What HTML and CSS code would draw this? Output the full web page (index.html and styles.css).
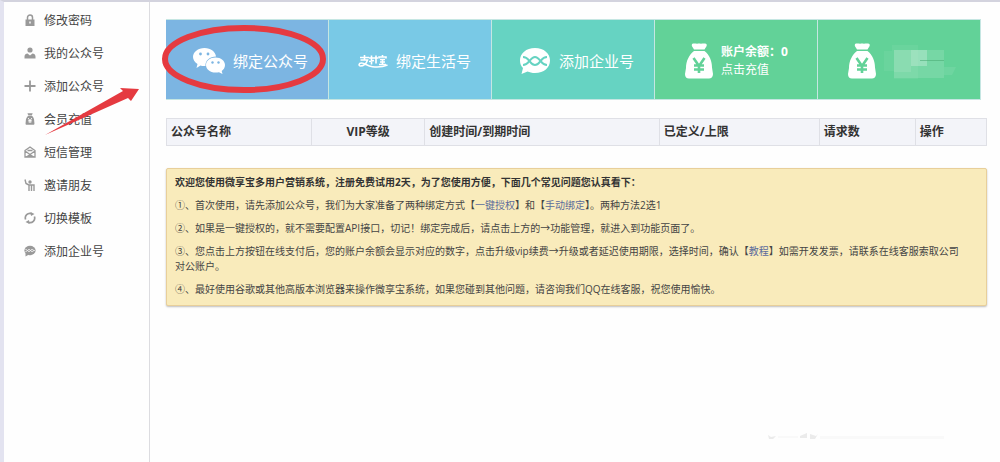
FILE: index.html
```html
<!DOCTYPE html>
<html lang="zh-CN">
<head>
    <meta charset="UTF-8">
    <meta name="viewport" content="width=device-width, initial-scale=1.0">
    <title>微享宝</title>
    <link rel="stylesheet" href="styles.css">
</head>
<body>
    <!-- shared shapes -->
    <svg class="symbols" aria-hidden="true">
        <symbol id="bag" viewBox="0 0 28 36">
            <path fill="currentColor" d="M7 1c2-1 4 0 7-.5C17 1 19 0 21.500 1c1 2-1 3.500-2 5.500H9C8 4.500 6 3 7 1zM9 8h10.500c5 4 7.500 10 7.500 16.500L28 31c0 3-2 4.500-4 4.500H4C1.500 35.500 0 34 0 31l1-6C1 18 4 12 9 8z"/>
            <path class="cut" d="M8.500 15l5.500 8 5.500-8M14 22v8M9 22.500h10M9 26.500h10"/>
        </symbol>
    </svg>

    <nav class="sidebar">
        <ul class="menu">
            <li><a href="#"><svg class="icon" viewBox="0 0 12 12"><path fill="none" stroke="currentColor" stroke-width="1.500" d="M3.500 6V3.500a2.500 2.500 0 0 1 5 0V6"/><path fill="currentColor" fill-rule="evenodd" d="M1.500 5.500h9V12h-9zM5.300 7.500v2h1.400v-2z"/></svg>修改密码</a></li>
            <li><a href="#"><svg class="icon" viewBox="0 0 12 12"><circle cx="6" cy="3" r="2.600" fill="currentColor"/><path fill="currentColor" d="M.5 11.500V9.500c0-2 1.500-2.800 3-3l2.500 2 2.500-2c1.500.2 3 1 3 3v2z"/></svg>我的公众号</a></li>
            <li><a href="#"><svg class="icon" viewBox="0 0 12 12"><path fill="none" stroke="currentColor" stroke-width="1.800" d="M6 .5v11M.5 6h11"/></svg>添加公众号</a></li>
            <li><a href="#"><svg class="icon" viewBox="0 0 28 36"><use href="#bag"/></svg>会员充值</a></li>
            <li><a href="#"><svg class="icon" viewBox="0 0 12 12"><path fill="none" stroke="currentColor" stroke-width="1.300" d="M1 4.500L6 1l5 3.500V11H1zM1 5l5 3.500L11 5M3.500 4.500h5"/><path fill="currentColor" d="M1 11l5-3 5 3z"/></svg>短信管理</a></li>
            <li><a href="#"><svg class="icon" viewBox="0 0 12 12"><circle cx="6" cy="3" r="1.700" fill="currentColor"/><path fill="none" stroke="currentColor" stroke-width="1.400" d="M1 .5l1 4 3 1.500v6M7.500 5.500V12M5 6h5v6"/></svg>邀请朋友</a></li>
            <li><a href="#"><svg class="icon" viewBox="0 0 12 12"><path fill="none" stroke="currentColor" stroke-width="1.700" d="M1.600 7.500A4.600 4.600 0 0 1 7.500 1.600M10.400 4.500a4.600 4.600 0 0 1-5.900 5.900"/><path fill="currentColor" d="M6.500 0l4 2-3.500 2zM5.500 12l-4-2L5 8z"/></svg>切换模板</a></li>
            <li><a href="#"><svg class="icon" viewBox="0 0 12 12"><ellipse cx="6" cy="5.500" rx="5.600" ry="4.700" fill="currentColor"/><path fill="currentColor" d="M1.500 8v3.500L5 9.500z"/><path fill="none" stroke="#fff" stroke-width=".8" d="M1.500 4.500c2 0 2 2 3.500 2s1.500-2 3-2 1 1 2.500 1M1.500 6.500c2 0 2-2 3.500-2s1.500 2 3 2 1-1 2.500-1"/></svg>添加企业号</a></li>
        </ul>
    </nav>

    <main class="content">
        <div class="tiles">
            <a class="tile tile-blue" href="#">
                <svg class="tile-icon" viewBox="0 0 32 26">
                    <path fill="#fff" d="M11.500 0C18 0 22.500 4 23 8.500c-6 0-11 4-10.500 9.500-2 .3-3.500 0-5-.5L3.500 20l1-4C1.500 14 0 11.500 0 9 0 4 5 0 11.500 0z"/>
                    <path fill="#fff" d="M22.500 9.500c5.500 0 9.500 3.500 9.500 7.500 0 2.500-1.300 4.500-3.300 6l.8 3-3.500-1.800c-1 .2-2.300.4-3.500.4-5.500 0-9.500-3.500-9.500-7.600s4-7.500 9.500-7.500z"/>
                    <g fill="#7cb5e2"><circle cx="7.500" cy="6" r="1.400"/><circle cx="15" cy="6" r="1.400"/><circle cx="19.500" cy="14.500" r="1.200"/><circle cx="25.500" cy="14.500" r="1.200"/></g>
                </svg>
                <span>绑定公众号</span>
            </a>
            <a class="tile tile-sky" href="#">
                <svg class="tile-icon" viewBox="0 0 32 26">
                    <g fill="none" stroke="#fff" stroke-width="1.600">
                        <path d="M4 9.500h9M8.500 7v5M4.500 12h7c-1 3.500-4 6-7 6-2 0-2-3 1-3 4 0 5 3 11 3.700 6 .7 10 .5 15-1.700"/>
                        <path d="M13 10h5M15.500 7.500v9M13 13.500l5-1M20 7.500v8M18 10h4"/>
                        <path d="M23 10.500V9h7v1.500M26.500 7v2M24 11.500h5M24 14h5M23 16.500h7M26.500 11v6"/>
                    </g>
                </svg>
                <span>绑定生活号</span>
            </a>
            <a class="tile tile-teal" href="#">
                <svg class="tile-icon" viewBox="0 0 32 26">
                    <path fill="#fff" d="M16 0c9 0 15 5.500 15 12.500S25 25 16 25c-3 0-5.500-.6-7.500-1.500L2.500 26l1.500-6C2 18 1 15.500 1 12.500 1 5.500 7 0 16 0z"/>
                    <g fill="none" stroke="#66d3c2" stroke-width="2"><path d="M4 9c3.500 0 4.500 1.500 6.500 4s3 4 5.500 4 3.500-1.500 5.500-4S24.500 9 28 9"/><path d="M4 17c3.500 0 4.500-1.500 6.500-4S13.500 9 16 9s3.500 1.500 5.500 4 3 4 6.500 4"/></g>
                </svg>
                <span>添加企业号</span>
            </a>
            <a class="tile tile-green" href="#">
                <svg class="bag-icon" viewBox="0 0 28 36"><use href="#bag"/></svg>
                <span class="balance"><b>账户余额：0</b><br>点击充值</span>
            </a>
            <a class="tile tile-green" href="#" aria-label="账户">
                <svg class="bag-icon" viewBox="0 0 28 36"><use href="#bag"/></svg>
                <svg class="mosaic" viewBox="0 0 72 40">
                    <g fill="#fff">
                        <path opacity=".05" d="M0 10h8V4h26v34H10v-8H0z"/>
                        <path opacity=".13" d="M10 9h50v28H10z"/>
                        <path opacity=".1" d="M10 9h33v16H27v6H10z"/>
                        <path opacity=".16" d="M27 9h16v16H27z"/>
                        <path opacity=".08" d="M60 26h12l-4 8h-8z"/>
                    </g>
                    <path stroke="#4dae78" opacity=".6" d="M36 19.500h24"/>
                </svg>
            </a>
            <svg class="ring" viewBox="0 0 166 72" aria-hidden="true"><ellipse cx="83" cy="36" rx="79" ry="31" fill="none" stroke="#e53a40" stroke-width="6"/></svg>
        </div>

        <table class="accounts">
            <thead>
                <tr>
                    <th class="col-name">公众号名称</th>
                    <th class="col-vip">VIP等级</th>
                    <th class="col-time">创建时间/到期时间</th>
                    <th class="col-limit">已定义/上限</th>
                    <th class="col-count">请求数</th>
                    <th>操作</th>
                </tr>
            </thead>
        </table>

        <section class="notice">
            <p><b>欢迎您使用微享宝多用户营销系统，注册免费试用2天，为了您使用方便，下面几个常见问题您认真看下：</b></p>
            <p>①、首次使用，请先添加公众号，我们为大家准备了两种绑定方式【<a href="#">一键授权</a>】和【<a href="#">手动绑定</a>】。两种方法2选1</p>
            <p>②、如果是一键授权的，就不需要配置API接口，切记！绑定完成后，请点击上方的→功能管理，就进入到功能页面了。</p>
            <p>③、您点击上方按钮在线支付后，您的账户余额会显示对应的数字，点击升级vip续费→升级或者延迟使用期限，选择时间，确认【<a href="#">教程</a>】如需开发发票，请联系在线客服索取公司对公账户。</p>
            <p>④、最好使用谷歌或其他高版本浏览器来操作微享宝系统，如果您碰到其他问题，请咨询我们QQ在线客服，祝您使用愉快。</p>
        </section>
    </main>

    <svg class="arrow" viewBox="0 0 100 50" aria-hidden="true"><path fill="#e53a40" d="M8 50L86 6l-3-3 19 1-8 12-3-3z"/></svg>
    <svg class="smudge" viewBox="0 0 190 16" aria-hidden="true">
        <g fill="#ddd"><path opacity=".6" d="M8 8l3 2 5-1-3 3H9zM40 9l7-3v5h-7zM50 7l6 2 2-2-3 5h-5z"/><path opacity=".15" d="M18 9h20v2H18zM60 9h124v3H60z"/></g>
    </svg>
</body>
</html>
```
FILE: styles.css
```css
* {
    box-sizing: border-box;
}

body {
    display: flex;
    position: relative;
    min-height: 100vh;
    margin: 0;
    border-top: 2px solid #d3d3de;
    border-left: 4px solid #e3e3f0;
    background: #fefefe;
    color: #444;
    font-family: "Open Sans", "Noto Sans CJK SC", sans-serif;
    font-size: 12px;
}

a {
    text-decoration: none;
}

.symbols {
    position: absolute;
    width: 0;
    height: 0;
}

/* sidebar */
.sidebar {
    flex: 0 0 146px;
    border-right: 1px solid #dcdce0;
}

.menu {
    margin: 0;
    padding: 1px 0 0 20px;
    list-style: none;
}

.menu a {
    display: flex;
    align-items: center;
    gap: 8px;
    height: 33px;
    color: #444;
}

.icon {
    width: 12px;
    height: 12px;
    color: #999;
}

.cut {
    fill: none;
    stroke: var(--cut, #fff);
    stroke-width: 2.6px;
}

/* content */
.content {
    flex: 1;
    min-width: 0;
    padding: 17px 13px 0 16px;
}

.tiles {
    display: grid;
    grid-template-columns: repeat(5, 1fr);
    position: relative;
    margin-right: 6px;
}

.tile {
    display: flex;
    align-items: center;
    gap: 8px;
    height: 81px;
    padding: 2px 0 0 27px;
    border: 1px solid #c5e6e2;
    border-left-width: 0;
    color: #fff;
    font-size: 15px;
}

.tile-blue {
    background: #7cb5e2;
}

.tile-sky {
    background: #79c9e6;
}

.tile-teal {
    background: #66d3c2;
}

.tile-green {
    padding-left: 30px;
    background: #62d298;
}

.tile-icon {
    width: 32px;
    height: 26px;
}

.bag-icon {
    --cut: #62d298;
    width: 28px;
    height: 36px;
}

.balance {
    font-size: 12px;
    line-height: 18px;
}

.mosaic {
    width: 72px;
    height: 40px;
}

.ring {
    position: absolute;
    top: 4px;
    left: -5px;
    width: 166px;
    height: 72px;
}

/* accounts table */
.accounts {
    width: 100%;
    margin-top: 18px;
    border-collapse: collapse;
    table-layout: fixed;
}

.accounts th {
    height: 27px;
    padding: 0 4px;
    border: 1px solid #dfe0e6;
    background: #f3f4f9;
    color: #333;
    line-height: 18px;
    text-align: left;
}

.accounts .col-name {
    width: 17.7%;
}

.accounts .col-vip {
    width: 13.8%;
    text-align: center;
}

.accounts .col-time {
    width: 28.6%;
}

.accounts .col-limit {
    width: 19.5%;
}

.accounts .col-count {
    width: 11.7%;
}

/* help notice */
.notice {
    margin-top: 22px;
    padding: 6px 24px 8px 8px;
    border: 1px solid #e8cf9a;
    border-radius: 2px;
    background: #f9ebbb;
    box-shadow: 0 1px 2px rgba(0, 0, 0, 0.25);
    font-size: 10px;
    line-height: 15px;
}

.notice p {
    margin: 0 0 8px;
}

.notice p:last-child {
    margin-bottom: 0;
}

.notice b {
    color: #333;
}

.notice a {
    color: #5c6b9c;
}

/* marks over the page */
.arrow {
    position: absolute;
    top: 83px;
    left: 33px;
    width: 100px;
    height: 50px;
    overflow: visible;
}

.smudge {
    position: absolute;
    top: 425px;
    left: 756px;
    width: 190px;
    height: 16px;
}
```
